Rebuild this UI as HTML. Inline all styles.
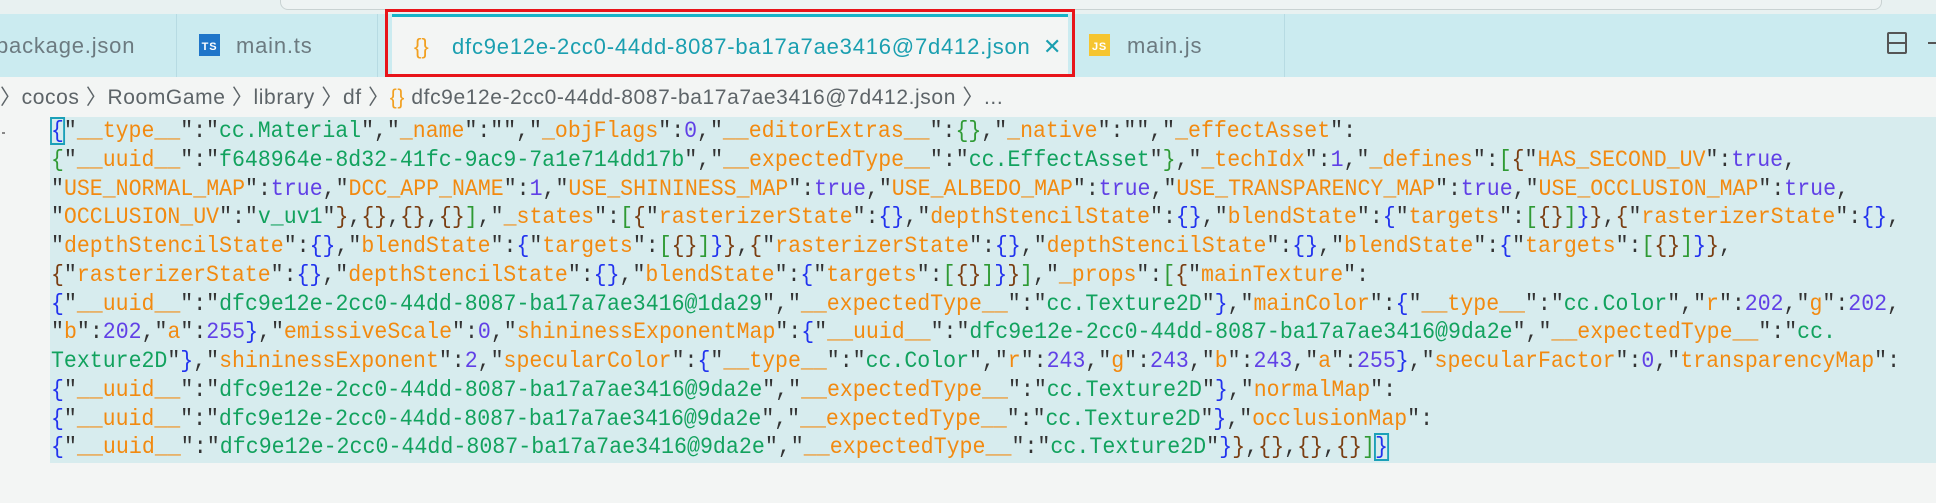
<!DOCTYPE html>
<html><head><meta charset="utf-8"><style>
html,body{margin:0;padding:0;width:1936px;height:503px;overflow:hidden;background:#f3f5f4;position:relative;font-family:"Liberation Sans",sans-serif}
.top{position:absolute;left:0;top:0;width:1936px;height:14px;background:#e8f1f1}
.top .r{position:absolute;left:280px;top:-10px;width:1600px;height:18px;border:1px solid #c9d2d2;border-radius:8px;background:#eef3f3}
.tabs{position:absolute;left:0;top:14px;width:1936px;height:63px;background:#cbebf0}
.tab{position:absolute;top:0;height:63px;border-right:1px solid #b7dbe3;font-size:22px;color:#6c7a80;line-height:63px;letter-spacing:0.8px}
.act{position:absolute;left:392px;top:14px;width:676px;height:63px;background:#f3f5f4;border-top:3px solid #17b3c8;box-sizing:border-box}
.red{position:absolute;left:385px;top:9px;width:690px;height:68px;border:3px solid #e8141a;box-sizing:border-box}
.bc{position:absolute;top:84px;height:28px;font-size:21px;color:#5d6468;line-height:28px;white-space:pre;letter-spacing:0.6px}
.code{position:absolute;left:50px;top:117px;width:1886px;height:346px;background:#d7ecee}
#c{position:absolute;left:51px;top:117px;margin:0;font-family:"Liberation Mono",monospace;font-size:23px;line-height:28.75px;color:#333;white-space:pre}
#c div{height:28.75px}
#c div span.l{display:inline-block;transform-origin:0 50%}
.k{color:#f28a10}.s{color:#12a25e}.n{color:#6040e6}
.b0{color:#2233ee}.b1{color:#2f9a34}.b2{color:#7a3e12}
.cur{outline:2px solid #1aa0b8;outline-offset:-1px}
</style></head><body>
<div class="top"><div class="r"></div></div>
<div class="tabs">
 <div class="tab" style="left:0;width:176px"><span style="margin-left:-4px">package.json</span></div>
 <div class="tab" style="left:177px;width:200px"><span style="position:absolute;left:22px;top:20px;width:21px;height:22px;background:#1f75c9;color:#fff;font-size:11px;line-height:26px;text-align:center;font-weight:bold">TS</span><span style="position:absolute;left:59px">main.ts</span></div>
 <div class="tab" style="left:1072px;width:212px;border-right:1px solid #b7dbe3"><span style="position:absolute;left:17px;top:20px;width:21px;height:22px;background:#f6c530;color:#fff;font-size:11px;line-height:26px;text-align:center;font-weight:bold">JS</span><span style="position:absolute;left:55px">main.js</span></div>
 <div style="position:absolute;left:1887px;top:18px;width:20px;height:22px;border:2px solid #555;border-radius:2px;box-sizing:border-box"><div style="position:absolute;left:0;right:0;top:8px;border-top:2px solid #555"></div></div>
 <div style="position:absolute;left:1928px;top:28px;width:8px;height:2px;background:#555"></div>
</div>
<div class="act"><span style="position:absolute;left:22px;top:0;line-height:60px;font-size:22px;color:#f2a020">{}</span><span style="position:absolute;left:60px;top:0;line-height:60px;font-size:22px;color:#1a9fb0;letter-spacing:0.8px">dfc9e12e-2cc0-44dd-8087-ba17a7ae3416@7d412.json</span><span style="position:absolute;left:651px;top:0;line-height:60px;font-size:22px;color:#1a9fb0">✕</span></div>
<div class="red"></div>
<div class="bc" style="left:0">〉cocos 〉RoomGame 〉library 〉df 〉<span style="color:#f2a020">{}</span> dfc9e12e-2cc0-44dd-8087-ba17a7ae3416@7d412.json 〉...</div>
<div style="position:absolute;left:2px;top:132px;width:3px;height:2px;background:#888"></div>
<div class="code"></div>
<div id="c"></div>
<script>
var t='{"__type__":"cc.Material","_name":"","_objFlags":0,"__editorExtras__":{},"_native":"","_effectAsset":\n'+
'{"__uuid__":"f648964e-8d32-41fc-9ac9-7a1e714dd17b","__expectedType__":"cc.EffectAsset"},"_techIdx":1,"_defines":[{"HAS_SECOND_UV":true,\n'+
'"USE_NORMAL_MAP":true,"DCC_APP_NAME":1,"USE_SHININESS_MAP":true,"USE_ALBEDO_MAP":true,"USE_TRANSPARENCY_MAP":true,"USE_OCCLUSION_MAP":true,\n'+
'"OCCLUSION_UV":"v_uv1"},{},{},{}],"_states":[{"rasterizerState":{},"depthStencilState":{},"blendState":{"targets":[{}]}},{"rasterizerState":{},\n'+
'"depthStencilState":{},"blendState":{"targets":[{}]}},{"rasterizerState":{},"depthStencilState":{},"blendState":{"targets":[{}]}},\n'+
'{"rasterizerState":{},"depthStencilState":{},"blendState":{"targets":[{}]}}],"_props":[{"mainTexture":\n'+
'{"__uuid__":"dfc9e12e-2cc0-44dd-8087-ba17a7ae3416@1da29","__expectedType__":"cc.Texture2D"},"mainColor":{"__type__":"cc.Color","r":202,"g":202,\n'+
'"b":202,"a":255},"emissiveScale":0,"shininessExponentMap":{"__uuid__":"dfc9e12e-2cc0-44dd-8087-ba17a7ae3416@9da2e","__expectedType__":"cc.\n'+
'Texture2D"},"shininessExponent":2,"specularColor":{"__type__":"cc.Color","r":243,"g":243,"b":243,"a":255},"specularFactor":0,"transparencyMap":\n'+
'{"__uuid__":"dfc9e12e-2cc0-44dd-8087-ba17a7ae3416@9da2e","__expectedType__":"cc.Texture2D"},"normalMap":\n'+
'{"__uuid__":"dfc9e12e-2cc0-44dd-8087-ba17a7ae3416@9da2e","__expectedType__":"cc.Texture2D"},"occlusionMap":\n'+
'{"__uuid__":"dfc9e12e-2cc0-44dd-8087-ba17a7ae3416@9da2e","__expectedType__":"cc.Texture2D"}},{},{},{}]}';
function esc(s){return s.replace(/&/g,'&amp;').replace(/</g,'&lt;');}
var toks=[],i=0,d=0,n=t.length;
function add(s,c){toks.push([s,c]);}
while(i<n){var c=t[i];
 if(c=='"'){var j=i+1;while(t[j]!='"')j++;var inner=t.substring(i+1,j);var k=j+1;
  var cls=t[k]==':'?'k':'s';add('"','');add(inner,cls);add('"','');i=j+1;continue;}
 if(c=='{'||c=='['){add(c,'b'+(d%3)+(i==0?' cur':''));d++;i++;continue;}
 if(c=='}'||c==']'){d--;add(c,'b'+(d%3)+(i==n-1?' cur':''));i++;continue;}
 if(/[0-9a-z]/.test(c)){var j=i;while(/[0-9a-z]/.test(t[j]))j++;add(t.substring(i,j),'n');i=j;continue;}
 add(c,'');i++;}
var lines=[''];
toks.forEach(function(tk){var parts=tk[0].split('\n');parts.forEach(function(p,ix){if(ix>0)lines.push('');if(p)lines[lines.length-1]+=tk[1]?'<span class="'+tk[1]+'">'+esc(p)+'</span>':esc(p);});});
var ends=[1356,1796,1849,1900,1732,1369,1900,1836,1900,1396,1433,1388];
var el=document.getElementById('c');
el.innerHTML=lines.map(function(l){return '<div><span class="l">'+l+'</span></div>';}).join('');
var ls=el.querySelectorAll('span.l');
for(var q=0;q<ls.length;q++){var w=ls[q].getBoundingClientRect().width;ls[q].style.transform='scaleX('+((ends[q]-51)/w)+')';}
</script>
</body></html>
